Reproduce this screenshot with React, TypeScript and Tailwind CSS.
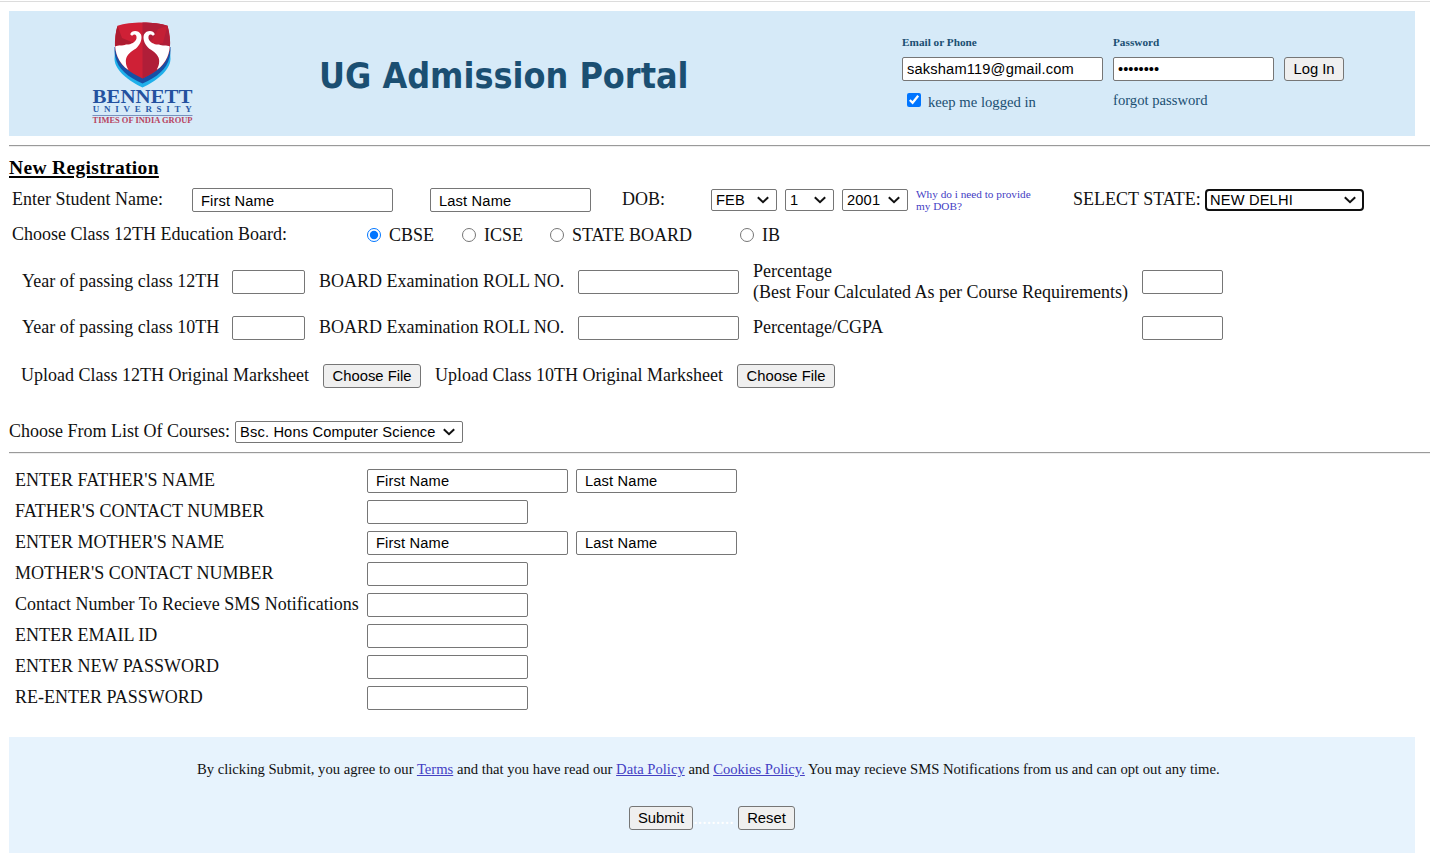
import React from "react";
import { clsx } from "clsx";

const SANS = "font-['Liberation_Sans',Arial,sans-serif]";

function Field({ className, value = "", type = "text" }: { className?: string; value?: string; type?: string }) {
  return (
    <input
      type={type}
      defaultValue={value}
      className={clsx(
        SANS,
        "h-6 shrink-0 rounded-[2px] border border-[#767676] bg-white text-[14.67px] leading-none text-black outline-none",
        type === "password" ? "tracking-normal" : "tracking-[0.16px]",
        className,
      )}
    />
  );
}

function Select({ value, className, focused }: { value: string; className: string; focused?: boolean }) {
  return (
    <div className={clsx("grid shrink-0 items-center", className)}>
      <select
        defaultValue={value}
        className={clsx(
          SANS,
          "col-start-1 row-start-1 h-[22px] w-full appearance-none bg-white py-0 text-[14.67px] tracking-[0.16px] text-black outline-none",
          focused
            ? "rounded-[4px] border-2 border-[#101010] pl-[3px] leading-[18px]"
            : "rounded-[2px] border border-[#767676] pl-1 leading-[20px]",
        )}
      >
        <option>{value}</option>
      </select>
      <svg
        viewBox="0 0 12 8"
        className="pointer-events-none col-start-1 row-start-1 mr-2 h-2 w-3 justify-self-end"
        fill="none"
        stroke="#111"
        strokeWidth="2"
      >
        <path d="M0.8 1.2 L6 6.2 L11.2 1.2" />
      </svg>
    </div>
  );
}

function Button({ children, className }: { children: React.ReactNode; className: string }) {
  return (
    <button
      type="button"
      className={clsx(
        SANS,
        "h-6 shrink-0 whitespace-nowrap rounded-[3px] border border-[#767676] bg-[#efefef] text-center text-[14.8px] leading-none text-black",
        className,
      )}
    >
      {children}
    </button>
  );
}

function Radio({ label, checked, className }: { label: string; checked?: boolean; className: string }) {
  return (
    <label className={clsx("flex shrink-0 items-center gap-2 whitespace-nowrap", className)}>
      <input type="radio" name="board" defaultChecked={checked} className="m-0 h-3.5 w-3.5 shrink-0" />
      {label}
    </label>
  );
}

const elephant =
  "M50.300 19 C51.500 15.200 58.500 14.800 61 19.500 C62.500 23.500 60.500 29 57 32.500 C54 35.500 45.800 38.500 45.800 46 C45.800 50 47 52.500 48.500 55 C40.500 50 35.800 41 35.200 31.500 C38 30 43 31 46 29.500 C50 30 55.500 27.500 56.500 23.500 C57 20.300 55 18.600 53.200 20 C52.200 21 50.600 20.500 50.300 19Z";

function Crest() {
  return (
    <svg viewBox="0 0 125 115" className="h-[115px] w-[125px] shrink-0">
      <path d="M34.5 44 C35 56 49 66 62.5 72.5 C76 66 90 56 90.500 44 L90 34 L35 34Z" fill="#1fb0ea" />
      <path d="M34.500 32 C34 51 44 60 62.500 68.500 C81 60 91 51 90.500 32Z" fill="#1750a5" />
      <path d="M62.500 7.500 C53 7.500 44 8.500 37.500 10.800 C35.500 18 34.600 25 35 32 C37 48 45 55 62.500 63.500 C80 55 88 48 90 32 C90.400 25 89.500 18 87.500 10.800 C81 8.500 72 7.500 62.500 7.500Z" fill="#cf2036" />
      <path d="M62.500 7.500 C72 7.500 81 8.500 87.500 10.800 C89.500 18 90.400 25 90 32 C88 48 80 55 62.500 63.500Z" fill="#b01e38" />
      <path d="M37.500 10.800 L42 23 L54 28 L36 31 L35.200 31 C35 24 35.500 17 37.500 10.800Z" fill="#ad1c30" />
      <path d="M87.500 10.800 L78 14 L74 22 L70 27 L72 30 L83 28Z" fill="#c41f35" />
      <g fill="#fff">
        <path d={elephant} />
        <path d={elephant} transform="translate(125 0) scale(-1 1)" />
      </g>
      <g fontFamily="Liberation Serif, serif" fontWeight="700">
        <text x="12.500" y="88.300" fontSize="18.500" textLength="100" lengthAdjust="spacingAndGlyphs" fill="#23519f">BENNETT</text>
        <text x="12.800" y="97" fontSize="9" textLength="99" fill="#2a5ba8">UNIVERSITY</text>
        <text x="12.500" y="107.700" fontSize="8" textLength="100" lengthAdjust="spacingAndGlyphs" fill="#b8435f">TIMES OF INDIA GROUP</text>
      </g>
      <path d="M12.500 100.500H112.500" stroke="#6d87b8" strokeWidth="0.900" />
    </svg>
  );
}

const contactRows = [
  { label: "ENTER FATHER'S NAME", pair: true },
  { label: "FATHER'S CONTACT NUMBER" },
  { label: "ENTER MOTHER'S NAME", pair: true },
  { label: "MOTHER'S CONTACT NUMBER" },
  { label: "Contact Number To Recieve SMS Notifications" },
  { label: "ENTER EMAIL ID" },
  { label: "ENTER NEW PASSWORD" },
  { label: "RE-ENTER PASSWORD" },
];

const link = "text-[#4440c4] underline";

export default function App() {
  return (
    <div className="h-[868px] w-[1430px] overflow-hidden bg-white pt-px font-['Liberation_Serif','Times_New_Roman',serif] text-[18px] leading-5 text-[#111]">
      <div className="h-px bg-[#dcdcdc]" />
      <header className="ml-[9px] mt-[9px] flex h-[125px] w-[1406px] bg-[#d6eaf8] text-[#1b4f72]">
        <div className="ml-[71px] mt-1 w-[125px]">
          <Crest />
        </div>
        <h1 className="ml-[114px] mt-[43px] w-[371px] whitespace-nowrap font-['DejaVu_Sans_Condensed','DejaVu_Sans',sans-serif] text-[35.6px] font-bold leading-[44px]">
          UG Admission Portal
        </h1>
        <div className="ml-[212px] mt-[25px] w-[201px]">
          <div className="h-[21px] text-[11.25px] font-bold leading-[13px]">Email or Phone</div>
          <Field value="saksham119@gmail.com" className="block w-[201px] pl-1" />
          <label className="ml-[5px] mt-3 flex h-[18px] gap-[7px] whitespace-nowrap text-[14.67px] leading-[18px]">
            <input type="checkbox" defaultChecked className="m-0 h-3.5 w-3.5 shrink-0" />
            keep me logged in
          </label>
        </div>
        <div className="ml-2.5 mt-[25px] w-[161px]">
          <div className="h-[21px] text-[11.25px] font-bold leading-[13px]">Password</div>
          <Field type="password" value="12345678" className="block w-[161px] pl-1" />
          <div className="mt-2.5 whitespace-nowrap text-[14.67px] leading-[18px]">forgot password</div>
        </div>
        <Button className="ml-2.5 mt-[46px] w-[60px]">Log In</Button>
      </header>
      <div className="ml-[9px] mt-[9px] h-0.5 border-b border-t border-b-[#eee] border-t-[#9a9a9a]" />

      <main className="pl-[9px]">
        <h2 className="mt-[10px] h-[22px] whitespace-nowrap text-[19.5px] font-bold leading-[22px] tracking-[0.33px] text-black underline decoration-2 underline-offset-2">
          New Registration
        </h2>
        <div className="mt-[9px] flex h-6 items-center whitespace-nowrap">
          <span className="ml-[3px] w-[180px] shrink-0 pb-0.5">Enter Student Name:</span>
          <Field value="First Name" className="w-[201px] pl-2 pt-0.5" />
          <Field value="Last Name" className="ml-[37px] w-[161px] pl-2 pt-0.5" />
          <span className="ml-[31px] w-[89px] shrink-0 pb-0.5">DOB:</span>
          <Select value="FEB" className="w-[66px]" />
          <Select value="1" className="ml-2 w-[49px]" />
          <Select value="2001" className="ml-2 w-[66px]" />
          <a className="ml-2 w-[157px] shrink-0 text-[11.25px] leading-[12px] text-[#4440c4]">
            Why do i need to provide
            <br />
            my DOB?
          </a>
          <span className="w-[132px] shrink-0 pb-0.5">SELECT STATE:</span>
          <Select value="NEW DELHI" className="w-[159px]" focused />
        </div>
        <div className="mt-3 flex h-[22px] items-center whitespace-nowrap">
          <span className="ml-[3px] w-[355px] shrink-0 pb-0.5">Choose Class 12TH Education Board:</span>
          <Radio label="CBSE" checked className="w-[95px]" />
          <Radio label="ICSE" className="w-[88px]" />
          <Radio label="STATE BOARD" className="w-[190px]" />
          <Radio label="IB" className="w-[60px]" />
        </div>

        <div className="ml-[13px] mt-[13px] grid grid-cols-[210px_87px_259px_175px_389px_81px] grid-rows-[46px_46px] items-center whitespace-nowrap leading-[21px]">
          <span className="pb-0.5">Year of passing class 12TH</span>
          <Field className="w-[73px]" />
          <span className="pb-0.5">BOARD Examination ROLL NO.</span>
          <Field className="w-[161px]" />
          <span>
            Percentage
            <br />
            (Best Four Calculated As per Course Requirements)
          </span>
          <Field className="w-[81px]" />
          <span className="pb-0.5">Year of passing class 10TH</span>
          <Field className="w-[73px]" />
          <span className="pb-0.5">BOARD Examination ROLL NO.</span>
          <Field className="w-[161px]" />
          <span className="pb-0.5">Percentage/CGPA</span>
          <Field className="w-[81px]" />
        </div>

        <div className="ml-3 mt-[13px] flex h-6 items-center whitespace-nowrap">
          <span className="w-[302px] shrink-0 pb-0.5">Upload Class 12TH Original Marksheet</span>
          <Button className="w-[98px] pt-px">Choose File</Button>
          <span className="ml-3.5 w-[302px] shrink-0 pb-0.5">Upload Class 10TH Original Marksheet</span>
          <Button className="w-[98px] pt-px">Choose File</Button>
        </div>

        <div className="mt-[33px] flex h-[22px] items-center whitespace-nowrap">
          <span className="w-[226px] shrink-0 pb-0.5">Choose From List Of Courses:</span>
          <Select value="Bsc. Hons Computer Science" className="w-[228px]" />
        </div>
        <div className="mt-[9px] h-0.5 border-b border-t border-b-[#eee] border-t-[#9a9a9a]" />

        <div className="ml-1.5 mt-[15px] flex flex-col gap-[7px]">
          {contactRows.map((row) => (
            <div key={row.label} className="flex h-6 items-center gap-2 whitespace-nowrap">
              <span className="w-[344px] shrink-0 pb-0.5">{row.label}</span>
              {row.pair ? (
                <>
                  <Field value="First Name" className="w-[201px] pl-2" />
                  <Field value="Last Name" className="w-[161px] pl-2" />
                </>
              ) : (
                <Field className="w-[161px]" />
              )}
            </div>
          ))}
        </div>
      </main>

      <footer className="ml-[9px] mt-[27px] h-[116px] w-[1406px] bg-[#e7f3fd] pt-[23px]">
        <p className="ml-[188px] whitespace-nowrap text-[14.63px] leading-[18px]">
          By clicking Submit, you agree to our <a className={link}>Terms</a> and that you have read our{" "}
          <a className={link}>Data Policy</a> and <a className={link}>Cookies Policy.</a> You may recieve SMS
          Notifications from us and can opt out any time.
        </p>
        <div className="ml-[620px] mt-7 flex h-6 items-center">
          <Button className="w-16">Submit</Button>
          <span className="w-[45px] shrink-0 pr-1 text-center text-white">.........</span>
          <Button className="w-[57px]">Reset</Button>
        </div>
      </footer>
    </div>
  );
}
